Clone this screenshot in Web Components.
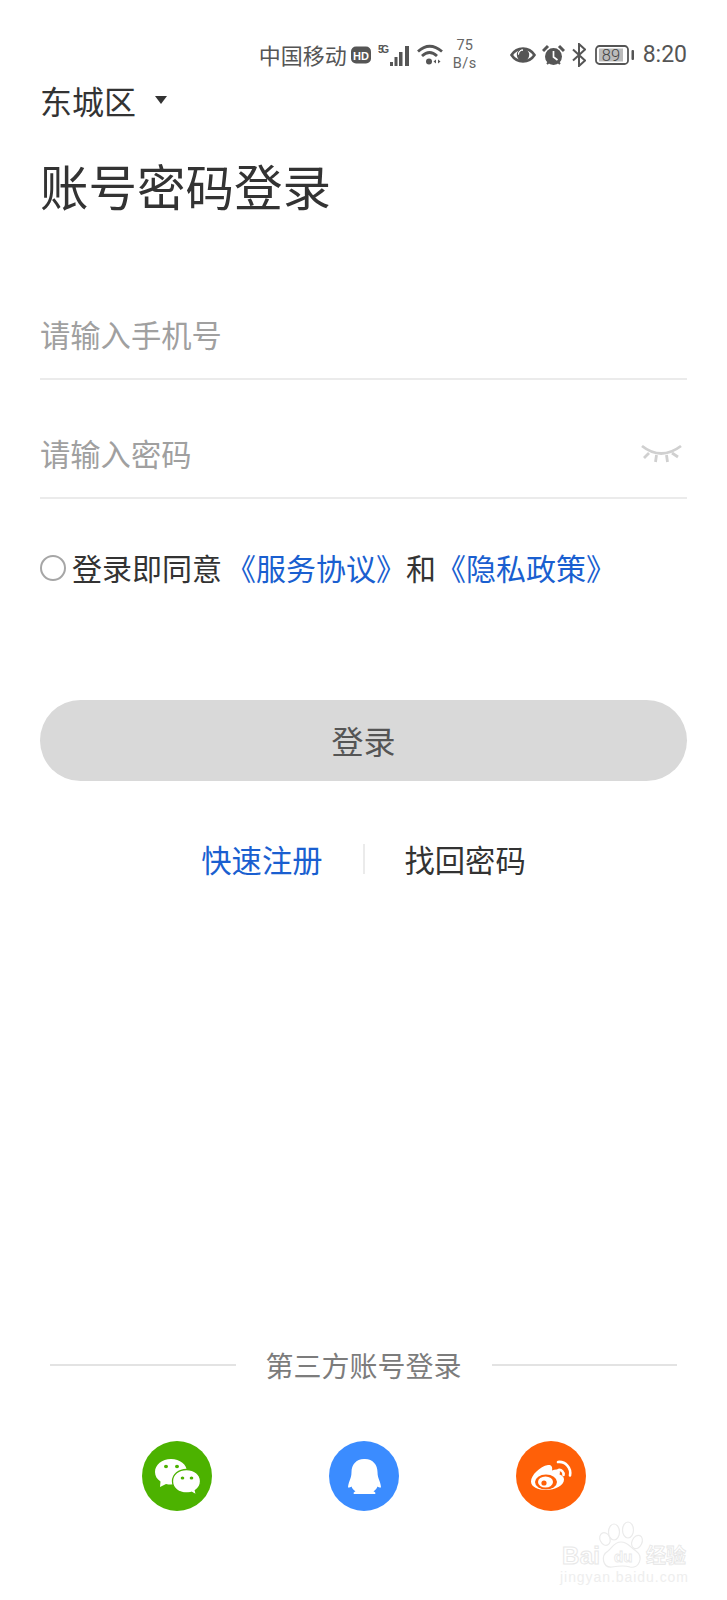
<!DOCTYPE html>
<html lang="zh">
<head>
<meta charset="utf-8">
<title>账号密码登录</title>
<style>
	html, body { margin: 0; background: #fff; }
	body { font-family: "Noto Sans CJK SC", "Noto Sans", sans-serif; color: #333; }
</style>
</head>
<body>
<login-page>
	<status-bar slot="status"></status-bar>
	<city-picker slot="city">东城区</city-picker>
	<h-title slot="title">账号密码登录</h-title>
	<text-field slot="phone" placeholder="请输入手机号"></text-field>
	<text-field slot="password" placeholder="请输入密码" eye></text-field>
	<agree-row slot="agree"></agree-row>
	<login-button slot="button">登录</login-button>
	<link-row slot="links"></link-row>
	<third-party slot="third"></third-party>
</login-page>
<script>
(() => {
	/* shadow root を作るだけの共通処理 */
	const define = (name, html) => {
		customElements.define(name, class extends HTMLElement {
			constructor() {
				super();
				this.attachShadow({mode: 'open'}).innerHTML = html;
			}
		});
	};

	define('login-page', `
		<style>
			:host { display: block; position: relative; width: 727px; height: 1600px; overflow: hidden; background: #fff; }
			.main { display: flex; flex-direction: column; height: 1600px; box-sizing: border-box; padding: 37px 40px 0; }
			.wm { position: absolute; left: 556px; top: 1515px; }
			slot[name="phone"]::slotted(*) { margin-top: 44px; }
		</style>
		<div class="main">
			<slot name="status"></slot>
			<slot name="city"></slot>
			<slot name="title"></slot>
			<slot name="phone"></slot>
			<slot name="password"></slot>
			<slot name="agree"></slot>
			<slot name="button"></slot>
			<slot name="links"></slot>
			<slot name="third"></slot>
		</div>
		<svg class="wm" width="135" height="72" viewBox="0 0 135 72" fill="none" stroke="#ebebeb" stroke-width="1.2">
			<ellipse cx="49" cy="24" rx="5" ry="6.500" transform="rotate(-25 49 24)"/>
			<ellipse cx="58" cy="17" rx="5.500" ry="8"/>
			<ellipse cx="72" cy="15" rx="5.500" ry="8"/>
			<ellipse cx="81" cy="27" rx="5" ry="7" transform="rotate(25 81 27)"/>
			<path d="M65 27c-7 0-9 6-13 9-8 5-5 17 4 16 6-1 12-2 18 0 9 2 14-10 6-16-5-3-8-9-15-9z"/>
			<text x="6" y="49" font-family="'Liberation Sans', sans-serif" font-size="24" font-weight="700" fill="#fff" stroke="#e8e8e8" stroke-width="1" textLength="38">Bai</text>
			<text x="58" y="47" font-family="'Liberation Sans', sans-serif" font-size="15" font-weight="700" fill="#fff" stroke="#e8e8e8" stroke-width="0.8">du</text>
			<text x="90" y="48" font-family="'Noto Sans CJK SC', sans-serif" font-size="20" font-weight="700" fill="#fff" stroke="#e6e6e6" stroke-width="0.8">经验</text>
			<text x="4" y="67" font-family="'Liberation Sans', sans-serif" font-size="14" fill="#eeeeee" stroke="none" textLength="128">jingyan.baidu.com</text>
		</svg>
	`);

	define('status-bar', `
		<style>
			:host { display: flex; align-items: center; justify-content: flex-end; height: 36px; color: #555; font-size: 22px; line-height: 36px; }
			svg { display: block; flex: none; }
			.carrier { margin-bottom: 3px; }
			.net { display: flex; flex-direction: column; align-items: center; font: 14.500px/18px "Roboto", sans-serif; width: 26px; margin: 0 32px 0 9px; color: #666; }
			.net span:last-child { letter-spacing: .5px; }
			.time { font: 23px/36px "Roboto", sans-serif; margin-left: 8px; }
		</style>
		<span class="carrier">中国移动</span>
		<svg style="margin-left:4px" width="20" height="18" viewBox="0 0 20 18"><rect width="20" height="17" y=".5" rx="5" fill="#555"/><text x="10" y="13.500" text-anchor="middle" font-family="'Liberation Sans',sans-serif" font-size="11" font-weight="700" fill="#fff">HD</text></svg>
		<svg style="margin-left:7px" width="33" height="22" viewBox="0 0 33 22"><text x="0" y="9" font-family="'Liberation Sans',sans-serif" font-size="10" font-weight="700" fill="#555" textLength="11">5G</text><g fill="#555"><rect x="12" y="18" width="3" height="4"/><rect x="16.500" y="13" width="3" height="9"/><rect x="21" y="8" width="3.500" height="14"/><rect x="27" y="2" width="4" height="20"/></g></svg>
		<svg style="margin-left:6px" width="26" height="24" viewBox="0 0 26 24" fill="none" stroke="#555" stroke-width="2.800"><path d="M1 8.500Q12.500-2 25 8.500"/><path d="M5 13Q12.500 6 20 13"/><circle cx="12" cy="18.500" r="3" fill="#555" stroke="none"/><path d="M19 16.500l-2.500 2 2.500 2zM21 16.500l2.500 2-2.500 2z" fill="#555" stroke="none"/></svg>
		<div class="net"><span>75</span><span>B/s</span></div>
		<svg width="26" height="20" viewBox="0 0 26 20"><path d="M1.500 10C7 1.500 19 1.500 24.500 10 19 18.500 7 18.500 1.500 10z" fill="none" stroke="#555" stroke-width="2.600"/><circle cx="13" cy="10" r="6.200" fill="#555"/><path d="M8.500 9.500a4.500 4.500 0 0 1 4.500-4.500 4 4 0 0 0-4.500 4.500z" fill="#fff" stroke="#fff"/></svg>
		<svg style="margin-left:6px" width="23" height="22" viewBox="0 0 23 22"><circle cx="11.500" cy="12.500" r="8.500" fill="#555"/><path d="M11.500 7v6l4 3" fill="none" stroke="#fff" stroke-width="1.700"/><path d="M1 7l5-5M22 7l-5-5" stroke="#555" stroke-width="3"/><path d="M5 20l2-2M18 20l-2-2" stroke="#555" stroke-width="2"/></svg>
		<svg style="margin-left:7px" width="14" height="24" viewBox="0 0 14 24" fill="none" stroke="#555" stroke-width="2"><path d="M1 6.500l12 11-6 5.500V1l6 5.500-12 11"/></svg>
		<svg style="margin-left:9px" width="40" height="20" viewBox="0 0 40 20"><rect x="1" y="1" width="32" height="18" rx="3.500" fill="none" stroke="#555" stroke-width="1.800"/><rect x="4" y="3.500" width="24" height="13" fill="#bbb"/><rect x="36.500" y="5" width="2.500" height="10" rx="1" fill="#555"/><text x="16" y="15.500" text-anchor="middle" font-family="Roboto,sans-serif" font-weight="300" font-size="16.500" fill="#444">89</text></svg>
		<span class="time">8:20</span>
	`);

	define('city-picker', `
		<style>
			:host { display: flex; align-items: center; height: 44px; margin-top: 5px; font-size: 32px; line-height: 44px; color: #333; }
			svg { margin-left: 19px; margin-top: -1px; }
		</style>
		<slot></slot>
		<svg width="12" height="8" viewBox="0 0 12 8"><path d="M0 0h12L6 8z" fill="#333"/></svg>
	`);

	define('h-title', `
		<style>
			:host { display: block; font-size: 48.500px; line-height: 64px; margin-top: 31px; color: #333; }
		</style>
		<slot></slot>
	`);

	class TextField extends HTMLElement {
		constructor() {
			super();
			const eye = this.hasAttribute('eye') ? `
				<svg width="42" height="22" viewBox="0 0 42 22" fill="none" stroke="#d0d0d0" stroke-width="2.800">
					<path d="M1 3Q20 18 40 3"/>
					<path d="M3 15l5-5M37 14l-6-4M14.500 19l1-7M26.500 19l-1-7"/>
				</svg>` : '';
			this.attachShadow({mode: 'open'}).innerHTML = `
				<style>
					:host { display: flex; align-items: center; justify-content: space-between; box-sizing: border-box; height: 119px; padding-top: 29px; border-bottom: 2px solid #ebebeb; font-size: 30.300px; color: #a0a0a0; }
					svg { margin: 2px 4px 0 0; }
				</style>
				<span>${this.getAttribute('placeholder')}</span>${eye}
			`;
		}
	}
	customElements.define('text-field', TextField);

	define('agree-row', `
		<style>
			:host { display: flex; align-items: center; height: 44px; margin-top: 46px; font-size: 30px; line-height: 44px; color: #333; white-space: pre; }
			i { display: block; box-sizing: border-box; width: 26px; height: 26px; border: 2px solid #a6a6a6; border-radius: 50%; margin: 1px 6px 0 0; }
			a { color: #1a5fd0; }
		</style>
		<i></i><span>登录即同意</span>
		<a style="margin-left:4px">《服务协议》</a><span>和</span><a>《隐私政策》</a>
	`);

	define('login-button', `
		<style>
			:host { display: flex; align-items: center; justify-content: center; box-sizing: border-box; height: 81px; margin-top: 111px; padding-bottom: 2px; border-radius: 41px; background: #d9d9d9; font-size: 32px; color: #555; }
		</style>
		<slot></slot>
	`);

	define('link-row', `
		<style>
			:host { display: flex; align-items: center; justify-content: center; height: 44px; margin-top: 56px; font-size: 30.300px; line-height: 44px; }
			a { color: #1a5fd0; }
			span { color: #333; }
			i { display: block; width: 2px; height: 30px; background: #ebebeb; margin: 0 40px; }
		</style>
		<a>快速注册</a><i></i><span>找回密码</span>
	`);

	define('third-party', `
		<style>
			:host { display: block; margin-top: auto; padding-bottom: 89px; }
			.head { display: flex; align-items: center; padding: 0 10px; font-size: 28px; line-height: 40px; color: #7c7c7c; }
			.head i { flex: 1; height: 2px; background: #e3e3e3; }
			.head span { margin: 0 30px; }
			.icons { display: flex; justify-content: center; gap: 117px; margin-top: 56px; }
			.icons svg { display: block; }
		</style>
		<div class="head"><i></i><span>第三方账号登录</span><i></i></div>
		<div class="icons">
			<svg width="70" height="70" viewBox="0 0 70 70">
				<circle cx="35" cy="35" r="35" fill="#4cb200"/>
				<path d="M29 18c-9 0-16 5.800-16 13 0 4 2 7.200 5.500 9.500L18 46l6-3c1.500.4 3 .6 5 .6 9 0 16-5.600 16-12.800S38 18 29 18z" fill="#fff"/>
				<ellipse cx="24" cy="25.500" rx="2" ry="1.800" fill="#4cb200"/>
				<ellipse cx="35" cy="25.500" rx="2" ry="1.800" fill="#4cb200"/>
				<path d="M44.500 28.500c-7.800 0-14 5-14 11.800s6.200 11.700 14 11.700c1.700 0 3.300-.2 5-.7l5 2.700-1.200-4.500c3.200-2.100 5.200-5.300 5.200-9.200 0-6.800-6.200-11.800-14-11.800z" fill="#fff" stroke="#4cb200" stroke-width="1.300"/>
				<ellipse cx="40.500" cy="37" rx="1.800" ry="1.600" fill="#4cb200"/>
				<ellipse cx="49.500" cy="37" rx="1.800" ry="1.600" fill="#4cb200"/>
			</svg>
			<svg width="70" height="70" viewBox="0 0 70 70">
				<circle cx="35" cy="35" r="35" fill="#3b8cff"/>
				<path d="M35 18c-8 0-12.500 6-12.500 13 0 4-1 6.500-2 9-.7 2-1.500 4.500-1.500 6.500 1 .3 2.500-.3 3.500-1 .8 2 2 3.500 4 5-1.200.3-2 .8-2 1.800 0 .5.500.7 1.200.7h19.600c.7 0 1.200-.2 1.200-.7 0-1-.8-1.500-2-1.800 2-1.500 3.200-3 4-5 1 .7 2.500 1.300 3.500 1 0-2-.8-4.500-1.500-6.500-1-2.500-2-5-2-9 0-7-4.500-13-12.500-13z" fill="#fff"/>
			</svg>
			<svg width="70" height="70" viewBox="0 0 70 70">
				<circle cx="35" cy="35" r="35" fill="#ff6008"/>
				<path d="M32 24c-8 1.500-17 10-17 16.500 0 5.500 7 8.500 15 8.500 9 0 18-4.500 18-10.500 0-3-2.500-4.300-4.500-5 1-2.500.5-5-3-5-1.500 0-3 .5-4.500 1 .8-3.500-.5-6.200-4-5.500z" fill="#fff"/>
				<ellipse cx="30" cy="41" rx="11" ry="7.500" fill="#ff6008"/>
				<ellipse cx="29.500" cy="41" rx="7.500" ry="5.500" fill="#fff"/>
				<circle cx="28" cy="42" r="2.600" fill="#ff6008"/>
				<path d="M42.500 29c2.800-.6 5.500 1.800 5 5M42 21c7.500-.8 13.500 6 12 13.500" fill="none" stroke="#fff" stroke-width="2.600" stroke-linecap="round"/>
			</svg>
		</div>
	`);
})();
</script>
</body>
</html>
